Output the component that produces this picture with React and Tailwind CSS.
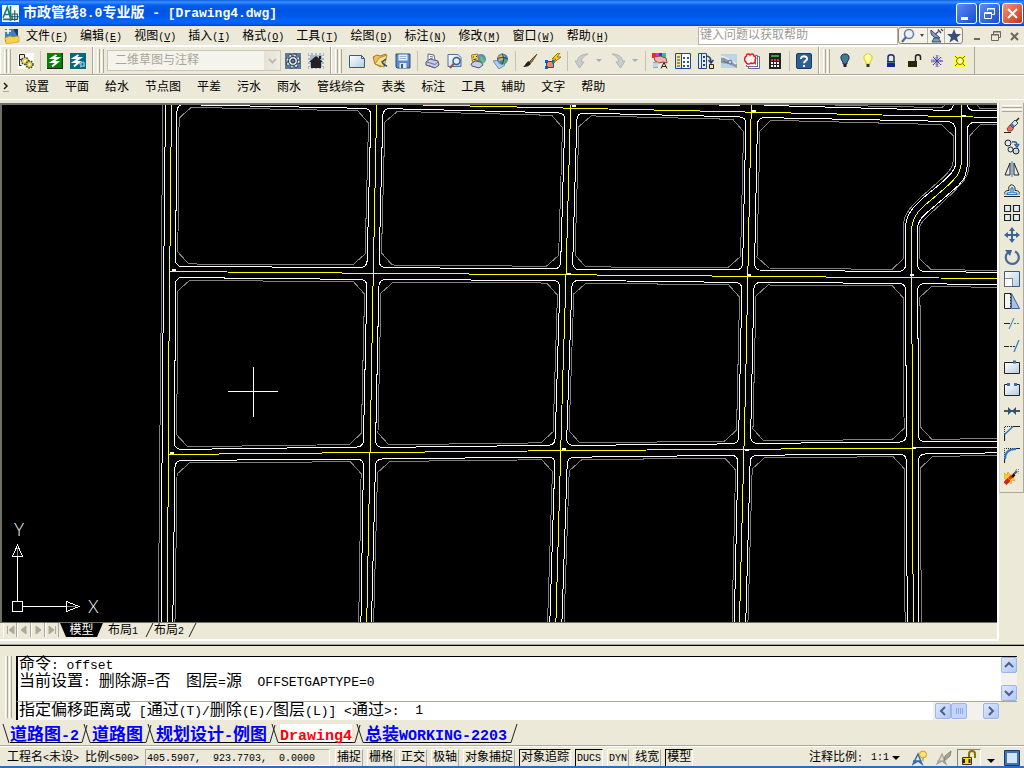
import React, { useState } from 'react';

const MENUS = [
    ['文件', 'F'], ['编辑', 'E'], ['视图', 'V'], ['插入', 'I'], ['格式', 'O'], ['工具', 'T'],
    ['绘图', 'D'], ['标注', 'N'], ['修改', 'M'], ['窗口', 'W'], ['帮助', 'H'],
];
const PIPE_MENUS = ['设置', '平面', '给水', '节点图', '平差', '污水', '雨水', '管线综合', '表类', '标注', '工具', '辅助', '文字', '帮助'];
const FILE_TABS = ['道路图-2', '道路图', '规划设计-例图', 'Drawing4', '总装WORKING-2203'];
const STATUS_TOGGLES = [
    ['捕捉', false], ['栅格', false], ['正交', false], ['极轴', false], ['对象捕捉', false],
    ['对象追踪', true], ['DUCS', true], ['DYN', false], ['线宽', false], ['模型', true],
];

// Corners of every street block, clockwise from the top left.
const BLOCKS = [
    [[177, 104.5], [371, 108.5], [367, 267.5], [175.5, 266.5]],
    [[383, 108.5], [565, 113], [560.5, 269], [379, 267.5]],
    [[577, 113], [746, 117], [742.5, 270], [572.5, 269.5]],
    [[175.5, 277.5], [367, 279.5], [363.3, 447], [174.5, 449.5]],
    [[379, 279.5], [560, 280.5], [555, 445.3], [375.5, 447.5]],
    [[572, 280.3], [742, 282.5], [738.5, 443.8], [566.5, 445.5]],
    [[754, 282.3], [905.7, 283.5], [906.3, 442], [750.5, 443.5]],
    [[917.7, 283.5], [1120, 287], [1120, 440], [918.6, 442]],
    [[175, 460.5], [363.5, 459], [360, 680], [172, 680]],
    [[375.6, 459], [555, 457], [548, 680], [370, 680]],
    [[567.4, 457.3], [738, 455.3], [733, 680], [560, 680]],
    [[750.3, 455.3], [906.3, 454], [907.6, 680], [744.2, 680]],
    [[918.6, 454], [1120, 451], [1120, 680], [919, 680]],
];

const CENTRE_LINES = [
    '171.5,100 169.5,296 168.6,380 167.4,640',
    '376.8,100 372.8,296 371.4,380 366.4,640',
    '570.8,100 565.4,296 562.7,380 555.4,640',
    '751.4,100 747.4,296 745.7,380 739,640',
    '911.6,229 911.5,296 912.4,380 912.6,540 913.8,640',
    '376,104 540,107.5 996,117.5 1100,120',
    '170,271.5 410,273.6 540,274.5 996,278.5 1100,279',
    '168,454.5 580,450.5 996,447.4 1100,447',
];

const NODES = [
    [572, 105], [752, 110], [962, 115], [172, 269], [567, 273], [747, 274],
    [910, 274], [170, 452], [562, 448], [745, 449], [912, 447],
];

const along = (a, b, d) => {
    const len = Math.hypot(b[0] - a[0], b[1] - a[1]);
    return [a[0] + ((b[0] - a[0]) * d) / len, a[1] + ((b[1] - a[1]) * d) / len];
};
const kerbPath = (q) => q.map((p, i) => {
    const a = along(p, q[(i + 3) % 4], 7);
    const b = along(p, q[(i + 1) % 4], 7);
    return `${i ? 'L' : 'M'}${a} Q${p} ${b}`;
}).join(' ') + 'Z';
const plotPath = (q) => {
    const inner = [[1, 1], [-1, 1], [-1, -1], [1, -1]].map(([sx, sy], i) => [q[i][0] + sx * 2.2, q[i][1] + sy * 2.6]);
    return inner.map((p, i) => `${i ? 'L' : 'M'}${along(p, inner[(i + 3) % 4], 11)} L${along(p, inner[(i + 1) % 4], 12)}`).join(' ') + 'Z';
};

// Han text and half-width text use two sizes so that two letters fill one Han cell.
const Mixed = ({ text, latin = 'text-[10px]' }) => (
    <span className="whitespace-pre">
      {text.split(/([\x20-\x7e]+)/).filter(Boolean).map((part, i) => (
        /^[\x20-\x7e]/.test(part) ? <span key={i} className={latin}>{part}</span> : part
      ))}
    </span>
);

const Icon = ({ children, size = 16 }) => (
    <svg width={size} height={size} viewBox="0 0 16 16" fill="none" className="shrink-0" aria-hidden="true">{children}</svg>
);

const ICONS = {
    layerKeys: <>
      <path d="M0 0h16v16H0z" fill="#fff"/>
      <path d="M1.500 1.500h5v5h-5zM1.500 6v6.500h2" stroke="#222" fill="#e8e8e8"/>
      <circle cx="7" cy="8" r="3.500" fill="#e8dc50" stroke="#444" strokeWidth="1.500" strokeDasharray="1.500 1"/>
      <circle cx="11.500" cy="11.500" r="3.500" fill="#d8c820" stroke="#444" strokeWidth="1.500" strokeDasharray="1.500 1"/>
      <circle cx="7" cy="8" r="1" fill="#fff"/><circle cx="11.500" cy="11.500" r="1.200" fill="#fff"/>
    </>,
    green: <>
      <path d="M0 0h16v16H0z" fill="#008200"/><path d="M0 15.500h16M15.500 0v16" stroke="#222"/>
      <path d="M9.500 2L5 5h6L5 9h5.500L5 13.500" stroke="#fff" strokeWidth="2"/>
    </>,
    teal: <>
      <path d="M0 0h16v16H0z" fill="#086884"/>
      <path d="M8.500 2L4 5h6L4 9h5l-5 4.500" stroke="#fff" strokeWidth="2"/>
      <path d="M9 11l5-2M10 14l5-2M11 8v6M14 9v5" stroke="#9cc8d8" strokeWidth="1.200"/>
    </>,
    gear: <>
      <path d="M0 0h16v16H0z" fill="#5b7c9c"/>
      <circle cx="8" cy="8" r="5.500" stroke="#222" strokeWidth="4" strokeDasharray="2.300 2.020"/>
      <circle cx="8" cy="8" r="5.500" stroke="#dde4ea" strokeWidth="2.500" strokeDasharray="2 2.320"/>
      <circle cx="8" cy="8" r="4.500" fill="#dde4ea" stroke="#2d3d4e"/><circle cx="8" cy="8" r="2" fill="#5b7c9c" stroke="#222"/>
    </>,
    house: <>
      <path d="M0 0h16v16H0z" fill="#a8b8c8"/><path d="M1 1h14v14H1z" stroke="#e6ebef" strokeWidth="2" strokeDasharray="2 2"/>
      <path d="M8 3l7 6h-2v6H3V9H1z" fill="#222"/><path d="M11 3h2v3h-2z" fill="#222"/>
    </>,
    newFile: <path d="M.5 2.500h12l3 3v9H.5zM12.500 2.500v3h3" fill="url(#sheet)" stroke="#2d5f88"/>,
    open: <>
      <path d="M1 4l4-2 3 1 6-2v3L9 14 3 11z" fill="#e9c158" stroke="#a87818"/><path d="M3 11l4-6 8-3-3 12z" fill="#f8e08c" stroke="#b88a28"/>
      <path d="M14 6l-4 3 3 4M10 9.500l5 4" stroke="#2c4c74" strokeWidth="1.500"/>
    </>,
    save: <>
      <path d="M1 1h14v14H2l-1-1z" fill="#5a8cc8" stroke="#285084"/><path d="M3.500 1.500h9v6h-9z" fill="#e8f2fb"/>
      <path d="M4.500 3.500h7M4.500 5.500h7" stroke="#9ab4d0"/><path d="M4.500 10h7v5h-7z" fill="#dfe7f0"/><path d="M6 11h2v4H6z" fill="#345f94"/>
    </>,
    print: <>
      <path d="M4 7V1l6 1 1 5" fill="#fff" stroke="#5a6484"/><path d="M2 9l4-3 8 2 1 4-4 3-9-3z" fill="#c5cbe4" stroke="#4c5478"/>
      <path d="M3 9l8 2.500 3-2.500" stroke="#6872a0"/><path d="M5 12.500l5 2M6 3.500l3 .5M6 5.500l3 .5" stroke="#68708c"/>
    </>,
    preview: <>
      <path d="M1 1.500h10l3 3v9H1z" fill="url(#sheet)" stroke="#4a7094"/><circle cx="9.500" cy="8" r="3.500" fill="#dcecf8" stroke="#3a5f8c" strokeWidth="1.500"/>
      <path d="M7 10.500L3 15" stroke="#8a5a30" strokeWidth="2"/>
    </>,
    publish: <>
      <circle cx="11" cy="6" r="5" fill="#4a90d0"/><path d="M9 3l4 1 2 4-2 3-2-3z" fill="#70b870"/>
      <path d="M1.500 2l6-1 1 6-6 2z" fill="#f8d858" stroke="#a07818"/><path d="M1 11l4-3 6 1 2 3-4 3-7-2z" fill="#c8cfe6" stroke="#4c5478"/>
      <path d="M3 4h1M6 3.500h1M3.500 6.500l3-.5" stroke="#222"/>
    </>,
    globe: <>
      <path d="M0 8l7-1 5 5-6 4z" fill="#b4cce4" stroke="#6e90b4"/><circle cx="9.500" cy="6" r="5.500" fill="#3d86c4"/>
      <path d="M5 4l4-3 3 2-2 4-4 1z" fill="#e8b040"/><path d="M10 7l5-1-2 4-4 1z" fill="#58a858"/><path d="M4 6c4-2 7-2 11 0M9 .5c2 3 2 7 0 11" stroke="#203c70"/>
    </>,
    brush: <><path d="M15 1L8 8l1.500 1.500z" fill="#b08040" stroke="#6c4c20"/><path d="M7 8l2 2c-1 3-4 4-8 4 2-1 3-5 6-6z" fill="#222"/></>,
    block: <>
      <path d="M1.500 8.500h7v6h-7z" fill="#f08c58" stroke="#244c90"/><path d="M0 7h3v3H0zM7 7h3v3H7zM0 13h3v3H0z" fill="#2858a8"/>
      <path d="M13 0L7 6h4l-4 5 9-7h-4l3-4z" fill="#ffd820" stroke="#a06c08"/>
    </>,
    undo: <path d="M1 8l4.500 7L10 9H7.500c0-4 2.500-6 6.500-8C8 1 3.500 4 3.500 8z" fill="#c9cbcf" stroke="#b0b2b8"/>,
    redo: <path d="M15 8l-4.500 7L6 9h2.500c0-4-2.500-6-6.500-8 6 0 10.500 3 10.500 7z" fill="#c9cbcf" stroke="#b0b2b8"/>,
    props: <>
      <path d="M0 0h4v5H0z" fill="#f02828"/><path d="M4 0h3v4H4z" fill="#e828e8"/><path d="M7 0h3v4H7z" fill="#2838f0"/><path d="M10 0h4v4h-4z" fill="#20c8a0"/>
      <path d="M2 4l6-1 6 2 1 5-4-1-4 1-4-2z" fill="#f0b4a8" stroke="#884848"/><path d="M1 9h5v6H1z" fill="#88a8c8"/><path d="M1 11h5M1 13h5" stroke="#fff"/>
      <path d="M9 15.500l3-6 3 6M10 13.500h4" stroke="#222"/>
    </>,
    designCenter: <>
      <path d="M.5.5h15v15H.5z" fill="#fff" stroke="#1c4c8c"/><path d="M1 1h5v14H1z" fill="#ffe88c"/><path d="M6.500 1v15" stroke="#1c4c8c"/>
      <path d="M2 4h3M2 7h3M2 10h3M2 13h3" stroke="#24406c"/><path d="M8 4h2v2H8zM12 4h2v2h-2zM8 8h2v2H8zM12 8h2v2h-2zM8 12h2v2H8zM12 12h2v2h-2z" fill="#2c588c"/>
    </>,
    palettes: <>
      <path d="M.5.5h8v15h-8z" fill="#e4edf6" stroke="#1c4c8c"/><path d="M3.500 1v15" stroke="#1c4c8c"/>
      <path d="M5 3h2v2H5zM5 7h2v2H5zM5 11h2v2H5z" fill="#24406c"/><path d="M8 3c4 0 5 2 5 6M10.500 7l2.500 3 2.500-3" stroke="#24406c" strokeWidth="1.500"/>
      <path d="M11.500 11.500h4v4h-4z" fill="#ffe88c" stroke="#222"/>
    </>,
    sheets: <>
      <path d="M0 1h16v14H0z" fill="#b8d4e6"/><path d="M0 4c4-2 6 2 9 3l7 4v4l-8-4-8-1z" fill="#8a9aa8"/><path d="M0 4c4-1 6 2 9 3l6 4" stroke="#eef4f8" strokeWidth="1.500"/>
      <circle cx="9" cy="9" r="2" fill="#c8d0d6" stroke="#5e6e7c"/><path d="M2 8l5 2" stroke="#5e6e7c"/>
    </>,
    markup: <>
      <path d="M4.500 13.500h9v-10h2v12h-11zM2.500 11.500h9v-9h2v11h-11z" fill="#fff" stroke="#646c94"/>
      <path d="M0 2h11v10H0z" fill="#fff4f2"/>
      <path d="M2.500 3c0-3 3-2 3.500-1 1-2 4-1 4 1 2 0 2 3 1 4 1 3-2 4-4 3-2 2-5 1-5-1-2-1-2-5 .5-6z" stroke="#e02020" strokeWidth="1.500"/>
    </>,
    calc: <>
      <path d="M2 0h12v16H2z" fill="#222"/><path d="M4 2h8v2H4z" fill="#38a048"/>
      <path d="M4 6h2v2H4zM7 6h2v2H7zM10 6h2v2h-2z" fill="#e83030"/><path d="M4 9h2v2H4zM7 9h2v2H7zM10 9h2v2h-2zM4 12h2v2H4zM7 12h2v2H7zM10 12h2v2h-2z" fill="#fff"/>
    </>,
    help: <>
      <rect x=".5" y=".5" width="15" height="15" rx="1.500" fill="#2d5f94" stroke="#183c64"/>
      <path d="M5 6c0-4 6.500-3.500 6 0-.3 2-3 1.800-3 4.200M8 12v2" stroke="#fff" strokeWidth="2"/>
    </>,
    bulbOff: <><path d="M8 1c5 0 5 5 2 8v2H6V9C3 6 3 1 8 1z" fill="#3c8088" stroke="#181878"/><path d="M6.500 11h3v3h-3z" fill="#222"/></>,
    bulbOn: <><path d="M8 1c5 0 5 5 2 8v2H6V9C3 6 3 1 8 1z" fill="#ffffa0" stroke="#d8c800"/><path d="M6.500 11h3v3h-3z" fill="#333"/><path d="M7 2h2M6 3v2" stroke="#fff"/></>,
    lock: <><path d="M5 8V4c0-3 6-3 6 0v4" stroke="#182888" strokeWidth="1.500"/><path d="M4 8h8v6H4z" fill="#102890"/><path d="M4 9.500h8" stroke="#3c8088"/></>,
    unlock: <><path d="M9.500 8V4c0-3 5-3 5 0v3" stroke="#222" strokeWidth="1.500"/><path d="M2 8h9v6H2z" fill="#282808"/></>,
    freeze: <>
      <path d="M8 2v12M2 8h12M4 4l8 8M12 4l-8 8" stroke="#3838a0"/>
      <circle cx="8" cy="8" r="3.500" stroke="#6060b8" strokeDasharray="1 1"/><circle cx="8" cy="8" r="5.500" stroke="#8080c8" strokeDasharray="1 2"/>
    </>,
    sun: <>
      <path d="M3 3h10v10H3z" fill="#ffff30" stroke="#ffff30" strokeWidth="2"/><circle cx="8" cy="8" r="3.500" fill="#ffff90" stroke="#706800"/>
      <path d="M3 3l2 2M13 3l-2 2M3 13l2-2M13 13l-2-2" stroke="#706800"/>
    </>,
};

const EDIT_ICONS = [
    ['删除', <><path d="M15 1l-5 5" stroke="#222" strokeWidth="1.500"/><path d="M11 3l3 3-5 5-3-3z" fill="#dce4ee" stroke="#345"/><path d="M8 6l3 3-2 2-3-3z" fill="#4a7cc0"/><path d="M6 8l3.500 3.500-2 2.500H4l-1-2z" fill="#e87060" stroke="#883c30"/><path d="M0 15.500h7" stroke="#222"/></>],
    ['复制', <><circle cx="4" cy="4" r="3" fill="#dce8f2" stroke="#222"/><circle cx="6.500" cy="10.500" r="2.500" fill="#dce8f2" stroke="#222"/><circle cx="12" cy="12" r="3" fill="#c4d8ea" stroke="#222"/><path d="M8 3c4-1 5 1 5 3M10.500 5l2.500 3 2-3" stroke="#2860a0" strokeWidth="1.500"/></>],
    ['镜像', <><path d="M6 2v12H1zM10 2v12h5z" fill="#e4ecf2" stroke="#222"/><path d="M8 0v16" stroke="#2878c8"/></>],
    ['偏移', <><path d="M0 13.500h16M1 11.500c-1-3 1-4 4-4C3 0 12 0 11 7.500c3 0 5 1 4 4" stroke="#222"/><path d="M3 11.500c0-2 1-2 4-2C6 3 10 3 9 9.500c3 0 4 0 4 2z" fill="#cfe2f4" stroke="#2878c8" strokeWidth="1.200"/></>],
    ['阵列', <path d="M.5.5h6v6h-6zM9.500.5h6v6h-6zM.5 9.500h6v6h-6zM9.500 9.500h6v6h-6z" fill="#e4ecf4" stroke="#222" strokeWidth="1.200"/>],
    ['移动', <path d="M8 0l3 4H9v3h3V5l4 3-4 3V9H9v3h2l-3 4-3-4h2V9H4v2L0 8l4-3v2h3V4H5z" fill="#3a6498"/>],
    ['旋转', <><path d="M4 3.500a6.500 6.500 0 1 0 7-1" stroke="#4a6c94" strokeWidth="2.200"/><path d="M1 1l7 0-2 6z" fill="#3a6498"/></>],
    ['缩放', <><path d="M.5.5h15v15H.5z" fill="url(#sheet)" stroke="#2d5f88"/><path d="M.5 7.500h8v8h-8z" fill="#fff" stroke="#222" strokeDasharray="1 1"/></>],
    ['拉伸', <><path d="M7.500.5l8 15h-8z" fill="#a8c4dc" stroke="#3a6498"/><path d="M7 .5H.5v15H7" fill="#f6f6f2" stroke="#222"/><path d="M6.500.5v15" stroke="#222" strokeDasharray="2 1"/></>],
    ['修剪', <><path d="M0 8.500h6" stroke="#222"/><path d="M10 8.500h6" stroke="#2878c8" strokeDasharray="2 1"/><path d="M10 3L5 14" stroke="#2878c8"/></>],
    ['延伸', <><path d="M0 9.500h5" stroke="#222"/><path d="M6 9.500h5" stroke="#222" strokeDasharray="2 1"/><path d="M15 3l-5 12" stroke="#2878c8" strokeWidth="1.200"/></>],
    ['打断于点', <><path d="M.5 3.500h15v11H.5z" fill="url(#sheet)" stroke="#222"/><path d="M9 1.500h3v3H9z" fill="#3a70a8"/></>],
    ['打断', <><path d="M3 3.500H.5v11h15v-11H13" fill="url(#sheet)" stroke="#222"/><path d="M3 2h3v3H3zM10 2h3v3h-3z" fill="#3a70a8"/></>],
    ['合并', <><path d="M0 8h16" stroke="#222" strokeWidth="1.500"/><path d="M4 4l4 4-4 4zM12 4L8 8l4 4z" fill="#2d5278"/></>],
    ['倒角', <><path d="M.5 16V9M9 1.500h7" stroke="#222" strokeWidth="1.200"/><path d="M.5 9V1.500H9" stroke="#222" strokeDasharray="1 1"/><path d="M.5 9.500L9 1.500" stroke="#2878c8" strokeWidth="1.500"/></>],
    ['圆角', <><path d="M.5 16v-4M12 1.500h4" stroke="#222" strokeWidth="1.200"/><path d="M.5 12V1.500H12" stroke="#222" strokeDasharray="1 1"/><path d="M1 12C1 5 5 2 12 2" stroke="#2878c8" strokeWidth="2"/></>],
    ['分解', <><path d="M9 6l4-4" stroke="#555" strokeWidth="2"/><path d="M11 1l4 4M14.500 0v4M12 .5h4" stroke="#888" strokeDasharray="1 1"/><path d="M0 4l3 2 1-3 2 3 4-1-1 3 2 4-3-1-1 4-2-2-4 2 1-4-2-3z" fill="#ffd028" stroke="#d88010" strokeWidth=".5"/><path d="M1 14.500l4-4" stroke="#d82020" strokeWidth="4"/><path d="M5 10l3-3" stroke="#e83020" strokeWidth="3"/><path d="M8 8l2.500-2.500" stroke="#300" strokeWidth="2.500"/></>],
];

const Tool = ({ name, label }) => (
    <button aria-label={label || name} className="flex h-[24px] w-[23px] shrink-0 items-center justify-center"><Icon>{ICONS[name]}</Icon></button>
);
const Grip = () => (
    <div className="mr-[3px] ml-[3px] flex h-[24px] shrink-0 gap-px">
      <span className="w-[3px] border-r border-l border-r-[#aca899] border-l-white"/>
      <span className="w-[3px] border-r border-l border-r-[#aca899] border-l-white"/>
    </div>
);
const Sep = () => <span className="mr-[2px] ml-[3px] h-[20px] w-px shrink-0 bg-[#c5c2b3]"/>;
const Bar = ({ children }) => (
    <div className="flex h-full shrink-0 items-center border-r border-l border-r-[#aca899] border-l-white pr-[3px]">
      <Grip />
      {children}
    </div>
);
const HistoryArrow = () => <span className="mr-[4px] ml-[3px] border-t-[3px] border-r-[3px] border-l-[3px] border-transparent border-t-[#a8abb5]"/>;

const TitleBar = () => (
    <header className="flex h-[26px] shrink-0 items-center bg-[linear-gradient(#0c5ce4_0,#3c90fc_2px,#0560f0_5px,#0054e3_10px,#0058ec_16px,#0266fc_21px,#0260f4_24px,#0040b0_26px)] pl-[2px]">
      <Icon size={17}>
        <path d="M0 0h16v16H0z" fill="#f4f8f8"/>
        <path d="M1 12L5 2l3 10M3 9h5M8 1v14M1 13.500h9" stroke="#187878" strokeWidth="1.500"/>
        <path d="M9.500 8.500h5v5h-5zM12 5v10M8 11h8" stroke="#185868"/>
      </Icon>
      <h1 className="ml-[4px] flex-1 text-[14px] leading-[20px] font-bold text-white"><Mixed text="市政管线8.0专业版 - [Drawing4.dwg]" latin="text-[13px]"/></h1>
      <div className="flex gap-[2px] pr-px">
        <button aria-label="最小化" className="flex h-[21px] w-[21px] items-center justify-center rounded-[3px] border border-white bg-linear-to-br from-[#5a8cf4] to-[#1c48d0]">
          <svg width="19" height="19"><path d="M4 13h7v3H4z" fill="#fff"/></svg>
        </button>
        <button aria-label="还原" className="flex h-[21px] w-[21px] items-center justify-center rounded-[3px] border border-white bg-linear-to-br from-[#5a8cf4] to-[#1c48d0]">
          <svg width="19" height="19" fill="none" stroke="#fff"><path d="M7.500 7V4.500h7v6H12M7 5h8"/><path d="M4.500 8.500h7v6h-7zM4 9.500h8"/></svg>
        </button>
        <button aria-label="关闭" className="flex h-[21px] w-[21px] items-center justify-center rounded-[3px] border border-white bg-linear-to-br from-[#f09078] to-[#c83010]">
          <svg width="19" height="19" stroke="#fff" strokeWidth="2"><path d="M5 5l9 9M14 5l-9 9"/></svg>
        </button>
      </div>
    </header>
);

const MenuBar = () => (
    <nav className="flex h-[19px] shrink-0 items-center pl-[4px]">
      <Icon>
        <path d="M1 1h8l4 4v9H1z" fill="#3c80c0"/><path d="M9 1h5v8z" fill="#183c68"/><path d="M4 0v6M1 3h6" stroke="#fff" strokeWidth="1.500"/>
        <path d="M1 10l5-2 3 1 6-1v6L2 16z" fill="#f8d048" stroke="#b88820" strokeWidth=".5"/>
      </Icon>
      <div className="ml-[6px] flex flex-1 gap-[12px] pt-[3px]">
        {MENUS.map(([name, key]) => (
          <button key={name} className="whitespace-nowrap">{name}<span className="text-[10px]">(<u>{key}</u>)</span></button>
        ))}
      </div>
      <input aria-label="帮助搜索" placeholder="键入问题以获取帮助" className="h-[18px] w-[200px] border border-[#b8b4a4] bg-white px-px text-[12px] placeholder:text-[#9c9a90]"/>
      <div className="flex h-[17px] items-center rounded-[3px] border border-[#8c8878] bg-[#f4f2ea]">
        <button aria-label="搜索" className="flex h-full w-[29px] items-center gap-[4px] border-r border-[#b8b4a4] pl-px">
          <Icon><circle cx="9" cy="6" r="4.500" fill="#e8f0fa" stroke="#6878a8" strokeWidth="1.500"/><path d="M6 9l-4 5" stroke="#5068a0" strokeWidth="2.200"/></Icon>
          <span className="border-t-[3px] border-r-[2px] border-l-[2px] border-transparent border-t-[#444]"/>
        </button>
        <button aria-label="通讯中心" className="flex h-full w-[17px] items-center justify-center border-r border-[#b8b4a4]">
          <Icon><path d="M3 2c-1 5 3 9 9 8z" fill="#8898b8" stroke="#344870"/><path d="M7.500 6l3-2.500M10 1.500l3 3.500M13 1l2 2" stroke="#344870" strokeWidth="1.200"/><path d="M6 10l-2 4h9l-3-4z" fill="#8898b8" stroke="#344870"/></Icon>
        </button>
        <button aria-label="收藏夹" className="flex h-full w-[17px] items-center justify-center">
          <Icon><path d="M8 1l2 5h5l-4 3.500 1.500 5-4.500-3-4.500 3L5 9.500 1 6h5z" fill="#3c4c78"/></Icon>
        </button>
      </div>
      <div className="ml-[7px] flex gap-[2px] pr-[2px] text-[#6a685c]">
        <button aria-label="最小化窗口" className="h-[16px] w-[16px]"><svg width="16" height="16"><path d="M4 10h6v2H4z" fill="currentColor"/></svg></button>
        <button aria-label="还原窗口" className="h-[16px] w-[16px]"><svg width="16" height="16" fill="none" stroke="currentColor"><path d="M5.500 6V3.500h7v6H11M5 4h8M3.500 6.500h7v6h-7zM3 7h8"/></svg></button>
        <button aria-label="关闭窗口" className="h-[16px] w-[16px]"><svg width="16" height="16" stroke="currentColor" strokeWidth="2"><path d="M5 5l7 7M12 5l-7 7"/></svg></button>
      </div>
    </nav>
);

const ToolbarRow = () => (
    <div className="flex h-[30px] shrink-0 border-t-2 border-b border-t-white border-b-[#aca899]">
      <Bar>
        <Tool name="layerKeys"/><Sep /><Tool name="green"/><Tool name="teal"/>
      </Bar>
      <Bar>
        <select disabled aria-label="工作空间" className="h-[21px] w-[174px] appearance-none border border-[#c9c7ba] bg-[#f4f3ec] bg-[linear-gradient(90deg,#e4e2d6,#eeece2)] bg-[length:16px_100%] bg-right bg-no-repeat pl-[7px] text-[12px] leading-[20px] text-[#a8a696]">
          <option>二维草图与注释</option>
        </select>
        <svg width="9" height="6" className="pointer-events-none -ml-[13px] mr-[4px] shrink-0" fill="none" stroke="#c0bdae" strokeWidth="2"><path d="M1 1l3.500 3.500L8 1"/></svg>
        <Tool name="gear"/><Tool name="house"/>
      </Bar>
      <Bar>
        <Tool name="newFile"/><Tool name="open"/><Tool name="save"/><Sep />
        <Tool name="print"/><Tool name="preview"/><Tool name="publish"/><Tool name="globe"/><Sep />
        <Tool name="brush"/><Tool name="block"/><Sep />
        <Tool name="undo"/><HistoryArrow /><Tool name="redo"/><HistoryArrow /><Sep />
        <Tool name="props"/><Tool name="designCenter"/><Tool name="palettes"/><Tool name="sheets"/><Tool name="markup"/><Tool name="calc"/><Sep />
        <Tool name="help"/>
      </Bar>
      <Bar>
        <Tool name="bulbOff"/><Tool name="bulbOn"/><Tool name="lock"/><Tool name="unlock"/><Tool name="freeze"/><Tool name="sun"/>
      </Bar>
    </div>
);

const PipeMenuBar = () => (
    <nav className="flex h-[25px] shrink-0 items-center gap-[16px] border-t border-b border-white pl-[3px]">
      <svg width="6" height="14" className="shrink-0" fill="none" stroke="#222"><path d="M1 2l3 3-3 3" strokeWidth="1.500"/><path d="M0 10.500h6" stroke="#aca899"/></svg>
      {PIPE_MENUS.map((name, i) => <button key={i} className="whitespace-nowrap">{name}</button>)}
    </nav>
);

const Drawing = () => (
    <svg className="block h-full w-full bg-black" fill="none" shapeRendering="crispEdges" role="img" aria-label="道路图">
      <g transform="translate(-2 -105)" strokeWidth="1">
        <g stroke="#808080">
          <path d="M162.500 100L161.500 296L160.400 380L158.200 640"/>
          {BLOCKS.map((q, i) => <path key={i} d={plotPath(q)}/>)}
          <path d="M760 131L771 120.300L941.700 124.600L953.400 136V159C953.400 164 952 168 947 173.500C939 182 926 192 917 201C908 210 903.500 216 903.500 226V258.500L892 269.500L769 268L757 257Z"/>
          <path d="M1100 126L980.500 124.600L969.400 136V161C969.400 167 968 174 965.500 178.500C957 190 943 202 930 214C923 220 919.500 224 919.400 229V258.500L931 269.500L1100 272"/>
          <path d="M835 105.300L942 107.600L946 104M976 104L980 108.300L1100 110"/>
        </g>
        <g stroke="#fff">
          <path d="M165.500 100L163.500 296L162.400 380L161.200 640"/>
          {BLOCKS.map((q, i) => <path key={i} d={kerbPath(q)}/>)}
          <path d="M757.400 125Q757.500 117.500 765 117.600L947 121.400Q955.500 122 955.500 130V163C955.500 168 953 172 948 176.500C940 185 931 191 923 198C912 208 905.600 216 905.600 227V264Q905.500 271.500 898 271.400L762 270.400Q754.500 270.300 754.600 263Z"/>
          <path d="M1100 124L975 122.500Q967.400 122.500 967.400 130V161C967.400 169 966 174 964 178.500C959 186 956 188 951.500 191.500C943 199 935 206 926.500 213C920 219 917.500 223 917.500 230V264Q917.500 271.300 925 271.400L1100 274"/>
          <path d="M719 105.400H740M764 105.300L947 110.400Q953 110.500 953.500 104M967 104Q968 110.300 974 110.400L1100 112"/>
        </g>
        <g stroke="#ff0">
          {CENTRE_LINES.map((points) => <polyline key={points} points={points}/>)}
          <path d="M961.500 100V158C961.500 166 960 172 956.500 176.500C948 187 934 197 923.500 206.500C916 213 911.600 221 911.600 230"/>
        </g>
        <g fill="#fff">
          {NODES.map(([x, y]) => <rect key={`${x}-${y}`} x={x} y={y} width="4" height="2"/>)}
        </g>
        <path d="M228 391.500H278M253.500 367V417" stroke="#fff"/>
        <g stroke="#fff">
          <path d="M12.500 601.500h10v10h-10zM17.500 601V557M12.500 556.500h10L17.500 545zM23 606.500H66M66.500 601.500v10L79 606.500z"/>
          <path d="M17.500 548v8M67 606.500h9" stroke="#808080"/>
        </g>
        <g fill="#fff" className="font-['Lato'] text-[17px] font-light">
          <text x="14" y="536">Y</text>
          <text x="88" y="613">X</text>
        </g>
      </g>
    </svg>
);

const EditBar = () => (
    <aside className="flex w-[27px] shrink-0 flex-col border-l-2 border-white">
      <div className="flex flex-col items-center border-r border-b border-l border-[#aca899] border-l-[#d8d5c6] pb-[4px]">
        <div className="flex h-[11px] w-[20px] flex-col gap-px pt-[2px]">
          <span className="h-[3px] border-t border-b border-t-white border-b-[#aca899]"/>
          <span className="h-[3px] border-t border-b border-t-white border-b-[#aca899]"/>
        </div>
        {EDIT_ICONS.map(([label, shape]) => (
          <button key={label} aria-label={label} className="flex h-[22px] w-[22px] items-center justify-center"><Icon>{shape}</Icon></button>
        ))}
      </div>
    </aside>
);

const Slash = () => <svg width="10" height="14" className="shrink-0" stroke="#222"><path d="M2 14L9 0"/></svg>;

const LayoutTabs = () => (
    <div className="flex h-[18px] shrink-0 items-start border-b-2 border-white pl-[3px]">
      {['M4.500 3v8M11 3L6 7l5 4z', 'M9 3L4 7l5 4z', 'M5 3l5 4-5 4z', 'M4 3l5 4-5 4zM10.500 3v8'].map((d, i) => (
        <button key={d} aria-label={['第一个', '上一个', '下一个', '最后一个'][i]} className="h-[14px] w-[14px] border-r border-l border-r-[#aca899] border-l-white">
          <svg width="12" height="14" viewBox="1 0 12 14" fill="#aca899" stroke="#aca899"><path d={d}/></svg>
        </button>
      ))}
      <button className="relative ml-px h-[15px] w-[43px] text-white">
        <svg width="43" height="15" className="absolute inset-0"><path d="M0 0h43l-6 14H6z" fill="#000"/></svg>
        <span className="relative block leading-[17px]">模型</span>
      </button>
      <button className="ml-[5px] leading-[17px]"><Mixed text="布局1"/></button>
      <span className="ml-[6px]"><Slash /></span>
      <button className="leading-[17px]"><Mixed text="布局2"/></button>
      <span className="ml-[3px]"><Slash /></span>
    </div>
);

const ScrollButton = ({ d, label }) => (
    <button aria-label={label} className="flex h-[16px] w-[16px] items-center justify-center rounded-[2px] border border-[#9cb4ec] bg-linear-to-br from-[#dce6fd] to-[#b4c8f8]">
      <svg width="10" height="10" fill="none" stroke="#4d6185" strokeWidth="2"><path d={d}/></svg>
    </button>
);

const CommandWindow = () => {
    const [command, setCommand] = useState('1');
    return (
      <section className="flex shrink-0 border-t border-black pt-[10px] pr-[7px] pl-[5px]">
        <div className="mr-[4px] flex gap-px pb-[2px]">
          <span className="w-[3px] border-r border-l border-r-[#aca899] border-l-white"/>
          <span className="w-[3px] border-r border-l border-r-[#aca899] border-l-white"/>
        </div>
        <div className="min-w-0 flex-1 text-[16px] leading-[16px]">
          <div className="flex h-[46px] justify-between border-t border-b border-l-2 border-[#aca899] border-t-black border-l-black bg-white">
            <div className="pl-px">
              <p><Mixed text="命令: offset" latin="text-[13px]"/></p>
              <p><Mixed text="当前设置: 删除源=否  图层=源  OFFSETGAPTYPE=0" latin="text-[13px]"/></p>
            </div>
            <div className="flex flex-col justify-between bg-[#f3f1ec]">
              <ScrollButton label="向上" d="M1 7l4-4 4 4"/>
              <ScrollButton label="向下" d="M1 3l4 4 4-4"/>
            </div>
          </div>
          <div className="mr-[18px] flex h-[18px] items-center border-l-2 border-black bg-white pl-px">
            <label htmlFor="prompt"><Mixed text="指定偏移距离或 [通过(T)/删除(E)/图层(L)] <通过>:  " latin="text-[13px]"/></label>
            <input id="prompt" value={command} onChange={(e) => setCommand(e.target.value)} className="h-[16px] min-w-0 flex-1 text-[13px] outline-none"/>
            <div className="flex h-full items-center bg-[#f3f1ec] pl-[2px]">
              <ScrollButton label="向左" d="M7 1L3 5l4 4"/>
              <span className="flex h-[16px] w-[16px] items-center justify-center gap-px rounded-[2px] border border-[#9cb4ec] bg-[#c4d4fb]">
                <i className="h-[6px] w-px bg-[#8ca8e8]"/><i className="h-[6px] w-px bg-[#8ca8e8]"/><i className="h-[6px] w-px bg-[#8ca8e8]"/><i className="h-[6px] w-px bg-[#8ca8e8]"/>
              </span>
              <span className="w-[16px]"/>
              <ScrollButton label="向右" d="M3 1l4 4-4 4"/>
            </div>
          </div>
        </div>
      </section>
    );
};

const FileTabs = () => {
    const [active, setActive] = useState('Drawing4');
    return (
      <div className="flex h-[26px] shrink-0 items-end border-b border-[#aca899] pb-[2px] pl-[2px] text-[17px] leading-[18px] font-bold">
        <svg width="8" height="19" className="shrink-0" stroke="#222"><path d="M1 0l6 19"/></svg>
        {FILE_TABS.map((name, i) => (
          <React.Fragment key={name}>
            <button onClick={() => setActive(name)} className={name === active ? 'h-[19px] border-b border-black bg-white pt-[3px] text-[#ff0000]' : 'h-[19px] border-b border-black pt-[3px] text-[#0000ff]'}>
              <Mixed text={name} latin="text-[15px]"/>
            </button>
            {i < FILE_TABS.length - 1
                ? <svg width="13" height="19" className="shrink-0" fill="none" stroke="#222"><path d="M0 18.500h3L8 1M5 0l6 18.500h2"/></svg>
                : <svg width="13" height="19" className="shrink-0" fill="none" stroke="#222"><path d="M0 18.500h4L10 0"/></svg>}
          </React.Fragment>
        ))}
      </div>
    );
};

const StatusBar = () => (
    <footer className="flex h-[22px] shrink-0 items-end border-t border-b-2 border-t-white border-b-[#3169c6] pl-[7px] leading-[19px]">
      <span className="h-[17px] w-[138px] shrink-0 whitespace-nowrap"><Mixed text="工程名<未设> 比例<500>"/></span>
      <span className="mr-[5px] h-[17px] w-[185px] shrink-0 border border-t-[#aca899] border-r-white border-b-white border-l-[#aca899] pl-px leading-[16px]"><Mixed text="405.5907,  923.7703,  0.0000"/></span>
      <div className="flex flex-1 gap-[4px]">
        {STATUS_TOGGLES.map(([name, on]) => (
          <button key={name} aria-pressed={on} className={on
              ? 'flex h-[17px] border-t border-r border-l border-t-black border-r-white border-l-black px-px leading-[17px] whitespace-nowrap'
              : 'flex h-[17px] border-t border-r border-l border-t-white border-r-[#aca899] border-l-white px-px leading-[17px] whitespace-nowrap'}>
            <Mixed text={name}/>
          </button>
        ))}
      </div>
      <span className="mr-[8px] h-[17px] whitespace-nowrap"><Mixed text="注释比例:"/></span>
      <button className="flex h-[17px] items-center gap-[3px] text-[10px]">1:1 <span className="border-t-[4px] border-r-[4px] border-l-[4px] border-transparent border-t-black"/></button>
      <button aria-label="注释可见性" className="ml-[12px]"><Icon><path d="M1 14L6 4l4 10-4-3zM1 11h8" stroke="#3c6ca8" strokeWidth="1.500" fill="#dce8f4"/><circle cx="11" cy="4.500" r="3.500" fill="#ffe478" stroke="#d89820"/><path d="M11 8v3" stroke="#886"/></Icon></button>
      <button aria-label="自动缩放" className="ml-[8px]"><Icon><path d="M1 14L6 4l4 10-4-3zM1 11h8" stroke="#a0a098" strokeWidth="1.200" fill="#dedcd0"/><path d="M15 1L9 6l-1 5 6-5z" fill="#a4a49c" stroke="#84847c"/></Icon></button>
      <button aria-label="锁定" className="ml-[5px] flex h-[17px] w-[24px] items-center justify-center border-t border-r border-l border-t-[#888574] border-r-white border-l-[#888574]"><Icon><path d="M8 7V4c0-4 6-4 6 0v4" stroke="#8c7008" strokeWidth="2"/><path d="M1.500 7.500h9v7h-9z" fill="#ffd820" stroke="#333"/><path d="M3 9v4M8.500 9v4" stroke="#222" strokeWidth="2"/></Icon></button>
      <button aria-label="状态栏菜单" className="ml-[6px] flex h-[10px] items-center"><span className="block border-t-[4px] border-r-[4px] border-l-[4px] border-transparent border-t-black"/></button>
      <button aria-label="全屏显示" className="mr-[4px] ml-[9px]"><Icon><path d="M.5.500h15v15H.5z" fill="#3a78b4" stroke="#183c64"/><path d="M3 3h10v10H3z" fill="#d4e6f6"/></Icon></button>
    </footer>
);

const App = () => (
    <div className="flex h-screen flex-col overflow-hidden bg-[#ece9d8] font-['Liberation_Mono','Noto_Sans_CJK_SC',monospace] text-[12px] leading-[16px] text-black">
      <svg width="0" height="0" className="absolute">
        <linearGradient id="sheet" x1="0" y1="0" x2="1" y2="1"><stop offset="0" stopColor="#fff"/><stop offset="1" stopColor="#b4cce0"/></linearGradient>
      </svg>
      <TitleBar />
      <MenuBar />
      <ToolbarRow />
      <PipeMenuBar />
      <main className="flex min-h-0 flex-1 pt-[3px]">
        <div className="flex min-w-0 flex-1 flex-col">
          <div className="min-h-0 flex-1 border-t-2 border-b border-l-2 border-[#716f64]"><Drawing /></div>
          <LayoutTabs />
        </div>
        <EditBar />
      </main>
      <div className="h-[4px] shrink-0 border-b border-[#aca899]"/>
      <CommandWindow />
      <FileTabs />
      <StatusBar />
    </div>
);
export default App;
